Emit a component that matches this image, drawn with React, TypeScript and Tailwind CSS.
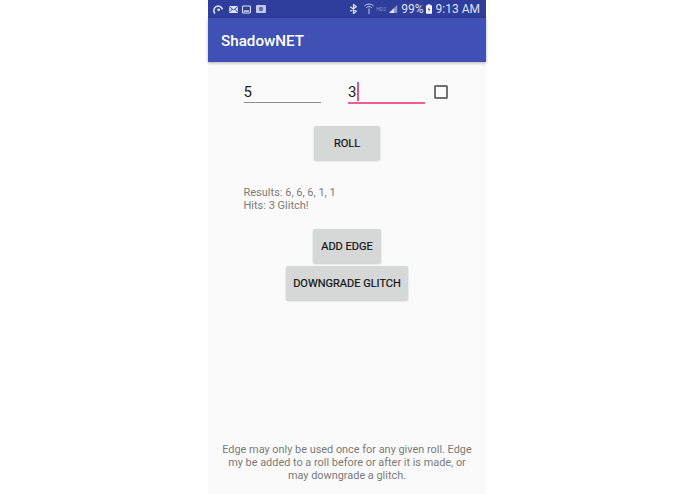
import React from "react";

function Btn({ label, className }: { label: string; className: string }) {
  return (
    <div className={`flex items-center justify-center rounded-[2px] bg-[#d6d7d7] pt-[3px] text-[11px] font-normal text-[#111] [-webkit-text-stroke:0.2px_#111] shadow-[0_1px_2px_rgba(0,0,0,0.2)] ${className}`}>
      {label}
    </div>
  );
}

export default function App() {
  return (
    <div className="h-[494px] w-[695px] overflow-hidden bg-white font-['Roboto',sans-serif]">
      <div className="ml-[208px] flex h-[494px] w-[278px] flex-col bg-[#fafafa]">
        <div className="flex h-[18px] items-center justify-between bg-[#2f3d9c] pl-[5px] pr-[6px] text-white">
          <div className="flex items-center gap-[4.500px]">
            <svg width="11" height="11" viewBox="0 0 11 11" fill="none" stroke="#dfe3f5" strokeWidth="1.6">
              <path d="M2 9.5A4.4 4.4 0 1 1 9.5 5.5" />
              <circle cx="5.6" cy="5.8" r="1.4" fill="#dfe3f5" stroke="none" />
            </svg>
            <svg width="9" height="7" viewBox="0 0 10 8">
              <rect width="10" height="8" rx="1" fill="#dfe3f5" />
              <path d="M0.5 1 5 4.5 9.500 1M0.5 7 3.500 3.500M9.500 7 6.500 3.500" stroke="#2f3d9c" strokeWidth="1" fill="none" />
            </svg>
            <svg width="9" height="9" viewBox="0 0 10 9">
              <rect x="0.6" y="0.6" width="8.800" height="7.800" rx="1" fill="none" stroke="#dfe3f5" strokeWidth="1.200" />
              <rect x="2" y="5.500" width="6" height="1.500" fill="#dfe3f5" />
            </svg>
            <svg width="10" height="8" viewBox="0 0 10 8">
              <rect width="10" height="8" rx="1" fill="#c3c9e8" />
              <circle cx="5" cy="4" r="2.200" fill="#5c69b5" />
            </svg>
          </div>
          <div className="flex items-center text-[12px] text-[#dfe2f3]">
            <svg width="9" height="10" viewBox="0 0 9 11" fill="none" stroke="#e6e8f5" strokeWidth="1.300" className="mr-[6px]">
              <path d="M1 3 7.500 8 4.500 10.500V.5L7.500 3 1 8" />
            </svg>
            <svg width="10" height="12" viewBox="0 0 11 13" fill="none" stroke="#c8cdea" strokeWidth="1.100" className="mr-[2px]">
              <path d="M.5 3C3.500.5 7.500.5 10.500 3M2.500 5C4.200 3.500 6.800 3.500 8.500 5" />
              <path d="M5.500 6V12" />
            </svg>
            <span className="mr-[3px] w-[10px] text-[5px] leading-none text-[#8f99d0]">HD2</span>
            <svg width="9" height="10" viewBox="0 0 11 10" className="mr-[3px]">
              <path d="M0 10 10 0V10Z" fill="#8f99d0" />
              <path d="M0 10 6 4V10Z" fill="#e6e8f5" />
            </svg>
            <span className="mr-[2px] leading-none">99%</span>
            <svg width="6" height="10" viewBox="0 0 7 11" className="mr-[4px]">
              <rect x="2" width="3" height="1.500" fill="#fff" />
              <rect y="1" width="7" height="10" rx="0.800" fill="#fff" />
              <path d="M4 2.500 2 6.500H3.500L3 9.500 5 5.500H3.500Z" fill="#2f3d9c" />
            </svg>
            <span className="leading-none">9:13 AM</span>
          </div>
        </div>
        <div className="z-10 flex h-[44px] items-center bg-[#3f51b5] pl-[13px] pt-[3px] text-[15.200px] font-medium text-white shadow-[0_1px_3px_rgba(0,0,0,0.3)]">
          ShadowNET
        </div>

        <div className="mt-[18px] flex h-[23px] items-start pl-[35.500px]">
          <div className="h-[23px] w-[77.500px] border-b border-[#8e8e8e] pt-[1.500px] text-[15px] leading-[21px] text-[#222]">5</div>
          <div className="ml-[27px] flex h-[23.500px] w-[77px] items-start border-b-2 border-[#ee5f8f] pt-[1.500px] text-[15px] leading-[21px] text-[#222]">
            3<span className="ml-[0.500px] h-[19px] w-[2px] bg-[#e0558a]" />
          </div>
          <div className="ml-[8.500px] mt-[5px] h-[14px] w-[14px] rounded-[1.500px] border-2 border-[#707070]" />
        </div>

        <Btn label="ROLL" className="ml-[106px] mt-[23px] h-[34px] w-[66px]" />

        <div className="ml-[35.500px] mt-[26px] text-[11px] leading-[13px] text-[#7a7a7a]">
          <div>Results: 6, 6, 6, 1, 1</div>
          <div>Hits: 3 Glitch!</div>
        </div>

        <Btn label="ADD EDGE" className="ml-[105px] mt-[17px] h-[34px] w-[68px]" />
        <Btn label="DOWNGRADE GLITCH" className="ml-[78px] mt-[3px] h-[34px] w-[122px]" />

        <div className="mt-auto mb-[12px] px-[13px] text-center text-[10.900px] leading-[13px] text-[#7a7a7a]">
          Edge may only be used once for any given roll. Edge my be added to a roll before or after it is made, or may downgrade a glitch.
        </div>
      </div>
    </div>
  );
}
